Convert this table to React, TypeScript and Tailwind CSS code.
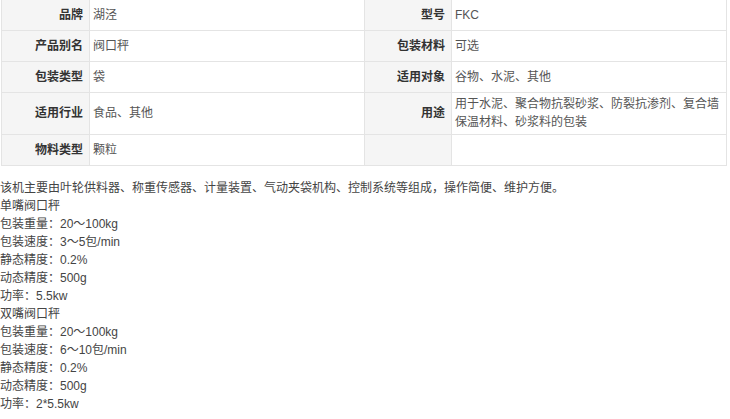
import React from 'react'

const rows: [string, string, string, string][] = [
  ['品牌', '湖泾', '型号', 'FKC'],
  ['产品别名', '阀口秤', '包装材料', '可选'],
  ['包装类型', '袋', '适用对象', '谷物、水泥、其他'],
  ['适用行业', '食品、其他', '用途', '用于水泥、聚合物抗裂砂浆、防裂抗渗剂、复合墙保温材料、砂浆料的包装'],
  ['物料类型', '颗粒', '', ''],
]

const lines = [
  '该机主要由叶轮供料器、称重传感器、计量装置、气动夹袋机构、控制系统等组成，操作简便、维护方便。',
  '单嘴阀口秤',
  '包装重量：20～100kg',
  '包装速度：3～5包/min',
  '静态精度：0.2%',
  '动态精度：500g',
  '功率：5.5kw',
  '双嘴阀口秤',
  '包装重量：20～100kg',
  '包装速度：6～10包/min',
  '静态精度：0.2%',
  '动态精度：500g',
  '功率：2*5.5kw',
]

const App: React.FC = () => {
  return (
    <div className="bg-white w-[730px] h-[419px] overflow-hidden text-[12px] leading-[18px] font-['Liberation_Sans','Noto_Sans_CJK_SC',sans-serif]">
      <table className="border-collapse table-fixed w-[725px] ml-px">
        <colgroup>
          <col className="w-[88px]" />
          <col className="w-[275px]" />
          <col className="w-[87px]" />
          <col className="w-[275px]" />
        </colgroup>
        <tbody>
          {rows.map((r, i) => (
            <tr key={i} className={i === 3 ? 'h-[42px]' : i === 0 ? 'h-[30px]' : 'h-[31px]'}>
              <td className="bg-[#f5f5f5] border border-[#e4e4e4] border-t-0 text-right font-bold text-[#333] px-[6px] py-0 align-middle">
                {r[0]}
              </td>
              <td className="border border-[#e4e4e4] border-t-0 text-[#555] px-[3px] py-0 align-middle">{r[1]}</td>
              <td className="bg-[#f5f5f5] border border-[#e4e4e4] border-t-0 text-right font-bold text-[#333] px-[6px] py-0 align-middle">
                {r[2]}
              </td>
              <td className="border border-[#e4e4e4] border-t-0 text-[#555] px-[3px] py-0 align-middle">{r[3]}</td>
            </tr>
          ))}
        </tbody>
      </table>
      <div className="mt-[13px] text-[#444]">
        {lines.map((l, i) => (
          <p key={i} className="h-[18px]">
            {l}
          </p>
        ))}
      </div>
    </div>
  )
}

export default App
